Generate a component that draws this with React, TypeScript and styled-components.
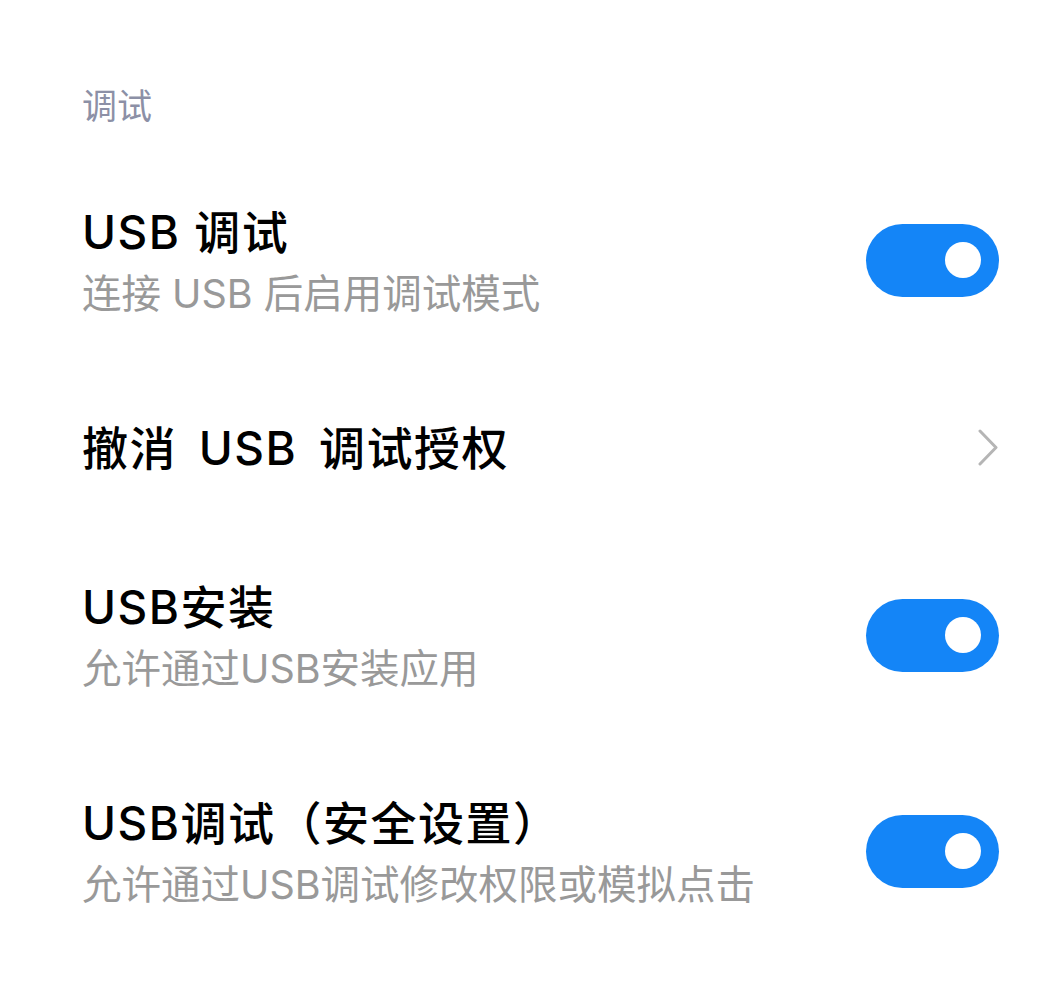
import styled, { createGlobalStyle } from "styled-components";

const GlobalStyle = createGlobalStyle`
    html, body {
        margin: 0;
        padding: 0;
        background: #ffffff;
    }
    body {
        font-family: Inter, "Noto Sans CJK SC", sans-serif;
        -webkit-font-smoothing: antialiased;
    }
`;

const Page = styled.div`
    padding: 81px 64px 0 82px;
    box-sizing: border-box;
    width: 1063px;
    min-height: 993px;
    background: #ffffff;
`;

const SectionTitle = styled.div`
    font-size: 35px;
    line-height: 50px;
    color: #8c90a6;
    margin-bottom: 21px;
`;

const Row = styled.div`
    display: flex;
    align-items: center;
    justify-content: space-between;
    padding: 49.5px 0;
`;

const TextBlock = styled.div`
    display: flex;
    flex-direction: column;
`;

const Title = styled.div<{ $wordGap?: number }>`
    font-size: 46px;
    line-height: 60px;
    font-weight: 500;
    letter-spacing: 1.5px;
    word-spacing: ${(props) => props.$wordGap ?? 0}px;
    color: #000000;
    white-space: nowrap;
`;

const Summary = styled.div`
    font-size: 39.5px;
    line-height: 50px;
    margin-top: 7px;
    color: #999999;
    white-space: nowrap;
`;

const Switch = styled.div<{ $on: boolean }>`
    position: relative;
    flex-shrink: 0;
    width: 133px;
    height: 73px;
    border-radius: 36.5px;
    background: ${(props) => (props.$on ? "#1485f7" : "#e5e5e5")};
    &::after {
        content: "";
        position: absolute;
        top: 18.5px;
        ${(props) => (props.$on ? "right: 18px;" : "left: 18px;")}
        width: 36px;
        height: 36px;
        border-radius: 50%;
        background: #ffffff;
    }
`;

const Chevron = styled.svg`
    flex-shrink: 0;
    margin-right: 1px;
`;

interface IItem {
    title: string;
    summary?: string;
    kind: "switch" | "link";
    on?: boolean;
    wordGap?: number;
}

const items: IItem[] = [
    { title: "USB 调试", summary: "连接 USB 后启用调试模式", kind: "switch", on: true },
    { title: "撤消 USB 调试授权", kind: "link", wordGap: 8 },
    { title: "USB安装", summary: "允许通过USB安装应用", kind: "switch", on: true },
    { title: "USB调试（安全设置）", summary: "允许通过USB调试修改权限或模拟点击", kind: "switch", on: true },
];

function App() {
    return (
        <>
            <GlobalStyle />
            <Page>
                <SectionTitle>调试</SectionTitle>
                {items.map((item) => (
                    <Row key={item.title}>
                        <TextBlock>
                            <Title $wordGap={item.wordGap}>{item.title}</Title>
                            {item.summary && <Summary>{item.summary}</Summary>}
                        </TextBlock>
                        {item.kind === "switch" ? (
                            <Switch $on={!!item.on} />
                        ) : (
                            <Chevron width="20" height="37" viewBox="0 0 20 37">
                                <polyline
                                    points="2,2 18,18.5 2,35"
                                    fill="none"
                                    stroke="#b5b5b5"
                                    strokeWidth="3"
                                    strokeLinecap="round"
                                    strokeLinejoin="round"
                                />
                            </Chevron>
                        )}
                    </Row>
                ))}
            </Page>
        </>
    );
}

export default App;
